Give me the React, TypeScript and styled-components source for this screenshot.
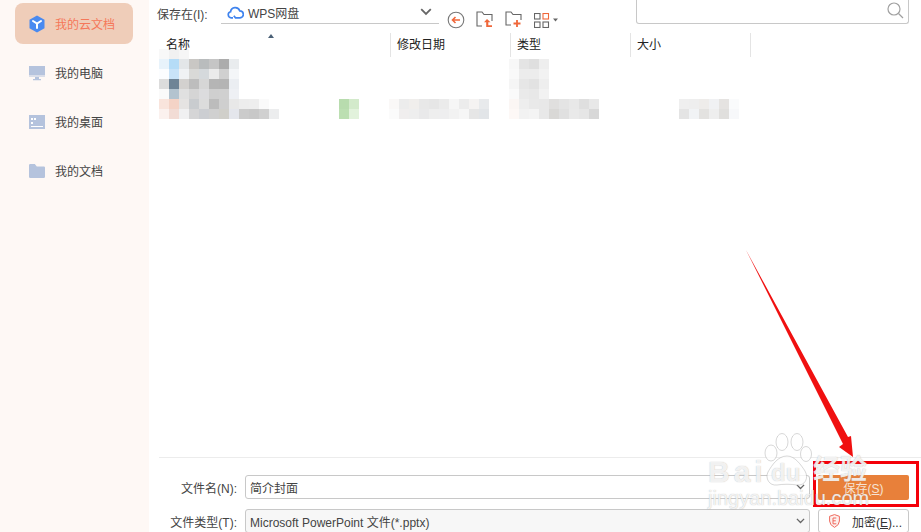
import styled, { createGlobalStyle } from "styled-components";

const GlobalStyle = createGlobalStyle`
  html, body {
    margin: 0;
    padding: 0;
    background: #fff;
  }
  body {
    font-family: "Liberation Sans", "Noto Sans CJK SC", sans-serif;
    font-size: 12px;
    color: #333;
  }
`;

const Page = styled.div`
  position: relative;
  display: flex;
  width: 921px;
  height: 532px;
  overflow: hidden;
`;

const Sidebar = styled.nav`
  display: flex;
  flex-direction: column;
  gap: 8px;
  flex: 0 0 149px;
  padding: 3px 16px 0 15px;
  box-sizing: border-box;
  background: #fef8f5;
`;

const NavItem = styled.div<{ $active?: boolean }>`
  display: flex;
  align-items: center;
  gap: 10px;
  height: 41px;
  padding-left: 14px;
  border-radius: 8px;
  background: ${(p) => (p.$active ? "#efcdb9" : "transparent")};
  color: ${(p) => (p.$active ? "#f5785a" : "#444")};
  font-size: 12px;
`;

const Main = styled.main`
  display: flex;
  flex-direction: column;
  flex: 1;
  min-width: 0;
`;

const Toolbar = styled.div`
  display: flex;
  align-items: flex-start;
  height: 33px;
  padding: 0 12px 0 8px;
`;

const PathLabel = styled.span`
  width: 64px;
  line-height: 30px;
  color: #444;
`;

const Location = styled.div`
  display: flex;
  align-items: center;
  gap: 4px;
  width: 218px;
  height: 23px;
  box-sizing: border-box;
  padding: 0 7px 0 6px;
  border-bottom: 1px solid #c8c8c8;
  color: #444;
  margin-top: 1px;
`;

const LocationName = styled.span`
  flex: 1;
  font-size: 12px;
`;

const ToolIcons = styled.div`
  display: flex;
  align-items: center;
  gap: 11px;
  margin: 11px 0 0 8px;
`;

const SearchBox = styled.div`
  display: flex;
  justify-content: flex-end;
  align-items: flex-start;
  width: 273px;
  height: 24px;
  margin-left: auto;
  padding: 2px 4px 0 0;
  box-sizing: border-box;
  border: 1px solid #c8c8c8;
  border-top: none;
  border-radius: 0 0 3px 3px;
`;

const Header = styled.div`
  position: relative;
  z-index: 1;
  display: flex;
  height: 24px;
  padding-left: 10px;
`;

const Column = styled.div<{ $width: number; $first?: boolean }>`
  width: ${(p) => p.$width}px;
  box-sizing: border-box;
  padding-left: ${(p) => (p.$first ? 7 : 6)}px;
  border-right: 1px solid #e4e4e4;
  line-height: 24px;
  color: #222;
  font-size: 12px;
`;

const SortArrow = styled.span`
  position: absolute;
  left: 119px;
  top: 1px;
  width: 0;
  height: 0;
  border: 3.5px solid transparent;
  border-top: none;
  border-bottom: 4px solid #4a6076;
`;

const FileList = styled.div`
  flex: 1;
  min-height: 0;
  margin-top: -8px;
  padding-left: 10px;
`;

const MosaicSvg = styled.svg`
  display: block;
`;

const Footer = styled.div`
  display: grid;
  grid-template-columns: 78px 565px 91px;
  grid-auto-rows: 24px;
  column-gap: 8px;
  row-gap: 10px;
  align-items: center;
  height: 75px;
  box-sizing: border-box;
  margin-left: 10px;
  padding-top: 17px;
  border-top: 1px solid #ececec;
  overflow: hidden;
`;

const FieldLabel = styled.label`
  justify-self: end;
  color: #444;
  white-space: nowrap;
`;

const Field = styled.div<{ $disabled?: boolean }>`
  display: flex;
  align-items: center;
  justify-content: space-between;
  height: 24px;
  box-sizing: border-box;
  padding: 0 4px;
  border: 1px solid #c8c8c8;
  border-radius: 3px;
  background: ${(p) => (p.$disabled ? "#f7f7f7" : "#fff")};
  color: #444;
`;

const Chevron = styled.svg`
  flex: none;
`;

const SaveButton = styled.button`
  height: 25px;
  padding: 0;
  border: none;
  border-radius: 2px;
  background: #e8803a;
  color: #f6e3d4;
  font: inherit;
`;

const EncryptButton = styled.button`
  display: flex;
  align-items: center;
  justify-content: center;
  gap: 12px;
  height: 24px;
  padding: 0 0 0 4px;
  border: 1px solid #c8c8c8;
  border-radius: 3px;
  background: #fff;
  color: #333;
  font: inherit;
`;

const Key = styled.span`
  text-decoration: underline;
`;

const Overlay = styled.svg`
  position: absolute;
  left: 0;
  top: 0;
  pointer-events: none;
`;

const RedBox = styled.div`
  position: absolute;
  left: 813px;
  top: 461px;
  width: 106px;
  height: 46px;
  box-sizing: border-box;
  border: 3px solid #f40009;
`;

const MarkText = styled.span<{ $x: number; $y: number; $size: number; $spacing?: number; $weight?: number }>`
  position: absolute;
  left: ${(p) => p.$x}px;
  top: ${(p) => p.$y}px;
  font-family: "Liberation Sans", "Noto Sans CJK SC", sans-serif;
  font-size: ${(p) => p.$size}px;
  font-weight: ${(p) => p.$weight ?? 400};
  letter-spacing: ${(p) => p.$spacing ?? 0}px;
  line-height: 1;
  color: rgba(255, 255, 255, 0.82);
  text-shadow: 0 0 1px rgba(150, 150, 150, 0.7);
  white-space: nowrap;
  pointer-events: none;
`;

// pixelated rows from the file list: [x, y, colours...], cells are 10px
const mosaic: [number, number, string][] = [
  [0, 0, "f8f8f8 f1f1f1 f6f6f6"],
  [0, 10, "e8f3fb b5dcf7 e3e6e8 c9c7c4 b9bcbd c5c5c5 acacac e9ecee"],
  [0, 20, "fbfdff c9e3f8 f0f2f4 d9d9d7 d5d9dc ebebeb d0d0d0 f4f6f8"],
  [0, 30, "dcdcdc 6f8496 d3d1cf bdbdbd d6d6d6 b5b5b5 b4b4b4 ebeef2"],
  [0, 40, "fafafa b3c3cf e0e0e0 d5d5d5 dcdcde cfcfcf d0d0d0 eef0f4"],
  [0, 50, "f9e4dc f4d3c6 e5e3e2 c9cccf dcdcdc bcbcbc cfcfcf e8e8e8 ededed eeeeee fafafa"],
  [0, 60, "fbf1ee f2dcd5 f0f0f1 d5d5d6 ccced2 d0d0d0 d0cfca e4e6ec cbcbcb c8c8c8 d0d0d0 ecedee"],
  [180, 50, "b8dcae d3eacb"],
  [180, 60, "bcdfb2 e2f2dc"],
  [230, 50, "faf8f7 ececec f0eeec e8e8e8 e6e6e6 ebebeb f6f6f6 ececec f5f3f2 e8eaec"],
  [230, 60, "fbfbfb f0eeee eeeeee e9e9ea eeeeee eeeeef f2f2f2 f6f6f6 e6e6e6 e2e5e8"],
  [350, 10, "f7f7f7 e4e4e4 dfdfdf eeeeee"],
  [350, 20, "f9f9f9 ececec ececec f2f2f2"],
  [350, 30, "f5f5f5 e6e6e6 e2e2e2 eeeeee"],
  [350, 40, "fafafa eaeaea e8e8e8 f2f2f2"],
  [350, 50, "fbf6f4 eeeeee e9e9e9 e8e8e8 e0dfde e4e4e4 e8e8e8 dfdfdf e8e8e8"],
  [350, 60, "fdf8f6 f2f2f2 f4f4f4 e8e8e8 d9d8d6 e0e0e0 e9e9e9 e6e6e6 d8d8d8"],
  [520, 50, "efefef eeeeee eeecea f0f1f3 e5e3e1 fafbfc"],
  [520, 60, "e4e4e4 f1f3f5 e3e2e0 eeeeee e0dfdd f7f8fa"],
];

function Mosaic() {
  return (
    <MosaicSvg width="590" height="72" shapeRendering="crispEdges">
      {mosaic.flatMap(([x, y, row]) =>
        row.split(" ").map((c, i) => (
          <rect key={`${x}-${y}-${i}`} x={x + i * 10} y={y} width="10" height="10" fill={`#${c}`} />
        ))
      )}
    </MosaicSvg>
  );
}

const HexIcon = () => (
  <svg width="16" height="18" viewBox="0 0 16 18">
    <path d="M8 .5 15.5 4.7v8.6L8 17.5.5 13.3V4.7z" fill="#4a8af0" />
    <path d="M4 6 8 8.6 12 6M8 8.6V13" fill="none" stroke="#fff" strokeWidth="2" strokeLinecap="round" />
  </svg>
);

const MonitorIcon = () => (
  <svg width="16" height="16" viewBox="0 0 16 16">
    <path d="M0 1h16v9.5H0z" fill="#b5c3dd" />
    <path d="M0 11.5h16V12H0zM6 12h4v2H6zM4 14h8v1.2H4z" fill="#b5c3dd" />
  </svg>
);

const DesktopIcon = () => (
  <svg width="16" height="14" viewBox="0 0 16 14">
    <path d="M0 0h16v14H0z" fill="#b5c3dd" />
    <path d="M2 3h2v2H2zM5 3h2v2H5zM2 7h2v2H2zM2 11h12v1H2z" fill="#fff" />
  </svg>
);

const FolderIcon = () => (
  <svg width="16" height="14" viewBox="0 0 16 14">
    <path d="M0 1.2Q0 0 1.2 0h4.6l2 2.4h7Q16 2.4 16 3.6v9.2q0 1.2-1.2 1.2H1.2Q0 14 0 12.8z" fill="#b5c3dd" />
  </svg>
);

const CloudIcon = () => (
  <svg width="17" height="13" viewBox="0 0 17 13">
    <path
      d="M6 11.800H4.200A3.100 3.100 0 0 1 3.600 5.700 4.700 4.700 0 0 1 12.700 4.800 3.500 3.500 0 0 1 13 11.800H8.500L6.800 9.800"
      fill="none"
      stroke="#3f83ee"
      strokeWidth="1.7"
    />
  </svg>
);

const BackIcon = () => (
  <svg width="18" height="18" viewBox="0 0 18 18">
    <circle cx="9" cy="9" r="7.8" fill="none" stroke="#777" strokeWidth="1.1" />
    <path d="M13 9H5.500M8.500 6 5.500 9l3 3" fill="none" stroke="#f0673a" strokeWidth="1.6" />
  </svg>
);

const FolderUpIcon = () => (
  <svg width="18" height="18" viewBox="0 0 18 18">
    <path d="M6 15H1V1h5l2 2.500h8V10" fill="none" stroke="#666" strokeWidth="1.1" />
    <path d="M11 8 8 11.200h2.200V16H16v-1.800h-3.700v-3H14.500z" fill="#f0673a" />
  </svg>
);

const FolderPlusIcon = () => (
  <svg width="18" height="18" viewBox="0 0 18 18">
    <path d="M6 14H1V1h5l2 2.500h8V9" fill="none" stroke="#666" strokeWidth="1.1" />
    <path d="M12 9v7M8.500 12.500h7" fill="none" stroke="#f0673a" strokeWidth="1.8" />
  </svg>
);

const ViewIcon = () => (
  <svg width="24" height="15" viewBox="0 0 24 15">
    <g fill="none" strokeWidth="1.1">
      <rect x=".5" y=".5" width="5.500" height="5.500" stroke="#666" />
      <rect x="9" y=".5" width="5.500" height="5.500" stroke="#f0673a" />
      <rect x=".5" y="9" width="5.500" height="5.500" stroke="#666" />
      <rect x="9" y="9" width="5.500" height="5.500" stroke="#666" />
    </g>
    <path d="M19 5.500h5l-2.500 3z" fill="#666" />
  </svg>
);

const SearchIcon = () => (
  <svg width="17" height="17" viewBox="0 0 17 17">
    <circle cx="7" cy="7" r="6" fill="none" stroke="#a0a0a0" strokeWidth="1.2" />
    <path d="M11.500 11.500 16 16" stroke="#a0a0a0" strokeWidth="1.2" />
  </svg>
);

const ShieldIcon = () => (
  <svg width="11" height="14" viewBox="0 0 11 14">
    <path d="M5.500.6 10.400 2.300V7q0 4-4.900 6.400Q.6 11 .6 7V2.300z" fill="#fdf0ee" stroke="#ef6a5e" strokeWidth="1" />
    <path d="M7.300 4H4V9.800H7.300M4 6.800H6.800" fill="none" stroke="#ef6a5e" strokeWidth="1" />
  </svg>
);

const Caret = ({ size = 9 }: { size?: number }) => (
  <Chevron width={size} height={size * 0.6} viewBox="0 0 10 6">
    <path d="M1 1 5 5 9 1" fill="none" stroke="#666" strokeWidth="1.5" />
  </Chevron>
);

const navItems = [
  { label: "我的云文档", icon: <HexIcon />, active: true },
  { label: "我的电脑", icon: <MonitorIcon /> },
  { label: "我的桌面", icon: <DesktopIcon /> },
  { label: "我的文档", icon: <FolderIcon /> },
];

const columns = [
  { label: "名称", width: 232, first: true },
  { label: "修改日期", width: 120 },
  { label: "类型", width: 120 },
  { label: "大小", width: 120 },
];

export default function App() {
  return (
    <Page>
      <GlobalStyle />
      <Sidebar>
        {navItems.map((item) => (
          <NavItem key={item.label} $active={item.active}>
            {item.icon}
            {item.label}
          </NavItem>
        ))}
      </Sidebar>
      <Main>
        <Toolbar>
          <PathLabel>保存在(I):</PathLabel>
          <Location>
            <CloudIcon />
            <LocationName>WPS网盘</LocationName>
            <Caret size={12} />
          </Location>
          <ToolIcons>
            <BackIcon />
            <FolderUpIcon />
            <FolderPlusIcon />
            <ViewIcon />
          </ToolIcons>
          <SearchBox>
            <SearchIcon />
          </SearchBox>
        </Toolbar>
        <Header>
          <SortArrow />
          {columns.map((c) => (
            <Column key={c.label} $width={c.width} $first={c.first}>
              {c.label}
            </Column>
          ))}
        </Header>
        <FileList>
          <Mosaic />
        </FileList>
        <Footer>
          <FieldLabel>文件名(N):</FieldLabel>
          <Field>
            简介封面
            <Caret />
          </Field>
          <SaveButton>
            保存(<Key>S</Key>)
          </SaveButton>
          <FieldLabel>文件类型(T):</FieldLabel>
          <Field $disabled>
            Microsoft PowerPoint 文件(*.pptx)
            <Caret />
          </Field>
          <EncryptButton>
            <ShieldIcon />
            <span>
              加密(<Key>E</Key>)...
            </span>
          </EncryptButton>
        </Footer>
      </Main>

      {/* annotation arrow */}
      <Overlay width="921" height="532">
        <path d="M746 250 848 437 851 436 853 457 839 447 843 444z" fill="#f01010" />
      </Overlay>
      <RedBox />

      {/* baidu watermark */}
      <Overlay width="921" height="532">
        <g fill="rgba(255,255,255,0.8)" stroke="rgba(170,170,170,0.6)" strokeWidth="0.8">
          <ellipse cx="771" cy="453" rx="6" ry="8" />
          <ellipse cx="782" cy="442" rx="6" ry="8.500" />
          <ellipse cx="797" cy="442" rx="6" ry="8.500" />
          <ellipse cx="806" cy="454" rx="5.500" ry="7.500" />
          <path d="M787 456c8 0 14 9 18 15 4 7 0 15-8 14-6-1-14-1-20 0-8 1-12-7-9-13 4-7 10-16 19-16z" />
        </g>
      </Overlay>
      <MarkText $x={708} $y={457} $size={30} $spacing={4} $weight={700}>
        Bai
      </MarkText>
      <MarkText $x={771} $y={461} $size={24} $weight={700}>
        du
      </MarkText>
      <MarkText $x={813} $y={457} $size={27} $weight={700}>
        经验
      </MarkText>
      <MarkText $x={708} $y={488} $size={20}>
        jingyan.baidu.com
      </MarkText>
    </Page>
  );
}
